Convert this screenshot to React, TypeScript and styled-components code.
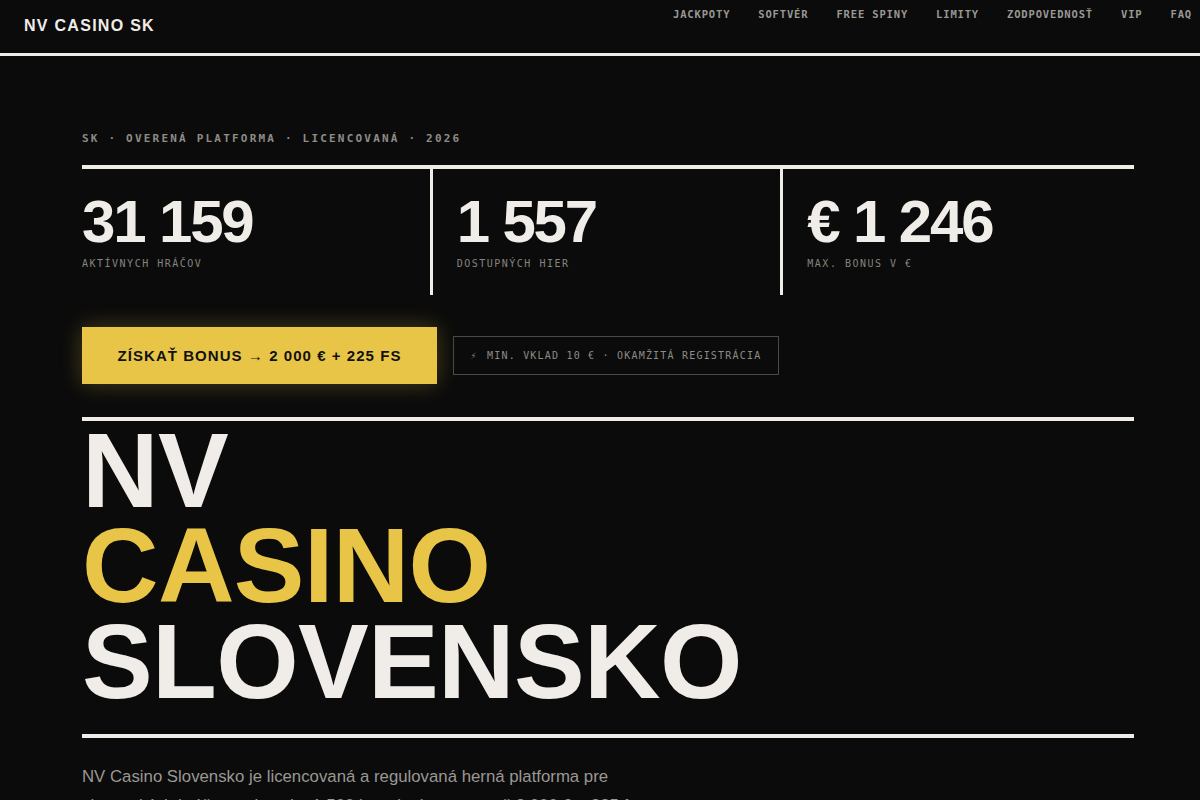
import React from "react";
import styled, { createGlobalStyle } from "styled-components";

const GlobalStyle = createGlobalStyle`
  html, body { margin: 0; padding: 0; background: #0b0b0b; }
  body { font-family: "Liberation Sans", Arial, sans-serif; color: #f0ede8; overflow: hidden; }
  * { box-sizing: border-box; }
`;

const MONO = `"DejaVu Sans Mono", "Liberation Mono", monospace`;

const Header = styled.header`
  display: flex;
  justify-content: space-between;
  align-items: flex-start;
  height: 56px;
  padding: 0 8px 0 24px;
  border-bottom: 3px solid #f0ede8;
`;

const Brand = styled.div`
  font-weight: 700;
  font-size: 16px;
  letter-spacing: 0.08em;
  line-height: 52px;
  color: #f0ede8;
`;

const Nav = styled.nav`
  display: flex;
  gap: 28px;
  padding-top: 8px;
`;

const NavLink = styled.a`
  font-family: ${MONO};
  font-size: 10.5px;
  font-weight: 700;
  letter-spacing: 0.08em;
  color: #9a9893;
  text-decoration: none;
  line-height: 12px;
`;

const Main = styled.main`
  padding: 76px 66px 0 82px;
`;

const Eyebrow = styled.div`
  font-family: ${MONO};
  font-size: 11px;
  font-weight: 700;
  letter-spacing: 0.2em;
  color: #8e8c87;
  line-height: 14px;
  margin-bottom: 19px;
`;

const Stats = styled.section`
  display: grid;
  grid-template-columns: repeat(3, 1fr);
  border-top: 4px solid #f0ede8;
`;

const Stat = styled.div<{ $last?: boolean; $first?: boolean }>`
  padding: 23px 24px 24px ${(p) => (p.$first ? "0" : "24px")};
  border-right: ${(p) => (p.$last ? "none" : "3px solid #f0ede8")};
`;

const StatNumber = styled.div`
  font-size: 60px;
  font-weight: 700;
  line-height: 1;
  letter-spacing: -0.036em;
  color: #f0ede8;
`;

const StatLabel = styled.div`
  font-family: ${MONO};
  font-size: 10px;
  letter-spacing: 0.15em;
  color: #85837e;
  margin-top: 5px;
  line-height: 14px;
`;

const Actions = styled.div`
  display: flex;
  align-items: center;
  gap: 16px;
  margin-top: 32px;
`;

const CTA = styled.a`
  display: flex;
  align-items: center;
  justify-content: center;
  width: 355px;
  height: 57px;
  background: #e8c547;
  color: #111;
  font-weight: 700;
  font-size: 15px;
  letter-spacing: 0.07em;
  text-decoration: none;
  box-shadow: 0 0 22px rgba(232, 197, 71, 0.28);
`;

const Note = styled.div`
  display: flex;
  align-items: center;
  justify-content: center;
  width: 326px;
  height: 39px;
  border: 1px solid #4a4946;
  font-family: ${MONO};
  font-size: 10px;
  letter-spacing: 0.12em;
  color: #8e8c87;
`;

const Bolt = styled.span`
  font-size: 10px;
  color: #77756f;
  margin-right: 2px;
`;

const Rule = styled.hr`
  border: 0;
  height: 4px;
  background: #f0ede8;
  margin: 0;
`;

const HeroRule = styled(Rule)`
  margin-top: 33px;
`;

const Title = styled.h1`
  margin: 2px 0 25px;
  font-size: 106px;
  line-height: 0.9;
  font-weight: 700;
  letter-spacing: -0.006em;
  color: #f0ede8;
`;

const TitleLine = styled.span<{ $accent?: boolean }>`
  display: block;
  color: ${(p) => (p.$accent ? "#e8c547" : "#f0ede8")};
`;

const Lead = styled.p`
  margin: 25px 0 0;
  max-width: 600px;
  font-size: 16.8px;
  line-height: 1.72;
  color: #9a9893;
`;

const navItems = ["JACKPOTY", "SOFTVÉR", "FREE SPINY", "LIMITY", "ZODPOVEDNOSŤ", "VIP", "FAQ"];

const stats = [
  { n: "31 159", l: "AKTÍVNYCH HRÁČOV" },
  { n: "1 557", l: "DOSTUPNÝCH HIER" },
  { n: "€ 1 246", l: "MAX. BONUS V €" },
];

export default function App() {
  return (
    <>
      <GlobalStyle />
      <Header>
        <Brand>NV CASINO SK</Brand>
        <Nav>
          {navItems.map((i) => (
            <NavLink key={i} href="#">{i}</NavLink>
          ))}
        </Nav>
      </Header>
      <Main>
        <Eyebrow>SK · OVERENÁ PLATFORMA · LICENCOVANÁ · 2026</Eyebrow>
        <Stats>
          {stats.map((s, idx) => (
            <Stat key={s.l} $first={idx === 0} $last={idx === stats.length - 1}>
              <StatNumber>{s.n}</StatNumber>
              <StatLabel>{s.l}</StatLabel>
            </Stat>
          ))}
        </Stats>
        <Actions>
          <CTA href="#">ZÍSKAŤ BONUS → 2 000 € + 225 FS</CTA>
          <Note>
            <Bolt>⚡</Bolt>&nbsp;MIN. VKLAD 10 € · OKAMŽITÁ REGISTRÁCIA
          </Note>
        </Actions>
        <HeroRule />
        <Title>
          <TitleLine>NV</TitleLine>
          <TitleLine $accent>CASINO</TitleLine>
          <TitleLine>SLOVENSKO</TitleLine>
        </Title>
        <Rule />
        <Lead>
          NV Casino Slovensko je licencovaná a regulovaná herná platforma pre slovenských hráčov s viac ako 1 500 hrami a bonusom až 2 000 € + 225 free spinov pre nových hráčov.
        </Lead>
      </Main>
    </>
  );
}
